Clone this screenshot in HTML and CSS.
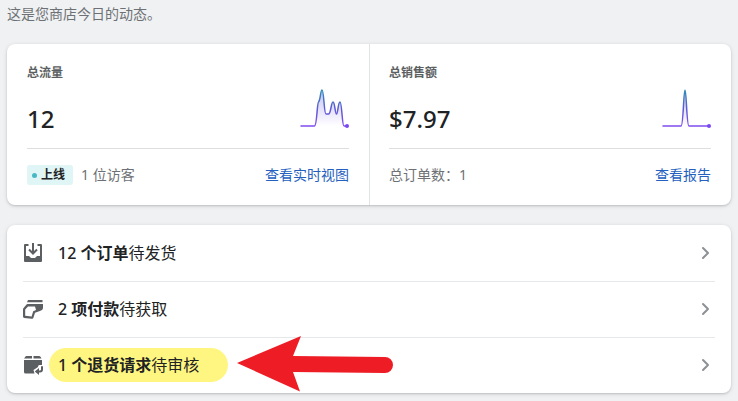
FILE: index.html
```html
<!DOCTYPE html>
<html lang="zh-CN">
<head>
<meta charset="utf-8">
<meta name="viewport" content="width=device-width, initial-scale=1">
<title>商店动态</title>
<link rel="stylesheet" href="styles.css">
</head>
<body>
<main>
  <p class="intro">这是您商店今日的动态。</p>

  <section class="card stats">
    <article class="stat">
      <h2 class="stat-title">总流量</h2>
      <div class="stat-main">
        <span class="stat-value">12</span>
        <svg class="spark" viewBox="-1 0 50 46" aria-hidden="true">
          <defs>
            <linearGradient id="line" gradientUnits="userSpaceOnUse" x1="0" y1="1" x2="0" y2="38">
              <stop offset="0" stop-color="#2d8fb8"/>
              <stop offset="0.5" stop-color="#5a5ed0"/>
              <stop offset="1" stop-color="#7f4df0"/>
            </linearGradient>
            <linearGradient id="fill" gradientUnits="userSpaceOnUse" x1="0" y1="1" x2="0" y2="38">
              <stop offset="0" stop-color="#5a78d0" stop-opacity="0.4"/>
              <stop offset="1" stop-color="#7f4df0" stop-opacity="0"/>
            </linearGradient>
          </defs>
          <path fill="url(#fill)" d="M15 38C17 38 17 15 18.500 14C20.500 12 20.500 2 22 2C24 2 24 26 26 26H28.500C31 26 31 14 33 14C35 14 35 26 36.500 26C38 26 38 14 40 14C42 14 42 38 44 38Z"/>
          <path fill="none" stroke="url(#line)" stroke-width="1.500" stroke-linecap="round" d="M1 38H14.500C17 38 17 15 18.500 14C20.500 12 20.500 2 22 2C24 2 24 26 26 26H28.500C31 26 31 14 33 14C35 14 35 26 36.500 26C38 26 38 14 40 14C42 14 42 38 44 38H47"/>
          <circle cx="47" cy="38" r="2" fill="#7b47f1"/>
        </svg>
      </div>
      <div class="stat-foot">
        <span class="visitors"><span class="badge">上线</span>1 位访客</span>
        <a href="#live">查看实时视图</a>
      </div>
    </article>
    <article class="stat">
      <h2 class="stat-title">总销售额</h2>
      <div class="stat-main">
        <span class="stat-value">$7.97</span>
        <svg class="spark" viewBox="-1 0 50 46" aria-hidden="true">
          <path fill="url(#fill)" d="M20 38C22 38 22 2 23 2C24 2 24 38 26 38Z"/>
          <path fill="none" stroke="url(#line)" stroke-width="1.500" stroke-linecap="round" d="M1 38H19C21.500 38 21.500 2 23 2C24.500 2 24.500 38 27 38H47"/>
          <circle cx="47" cy="38" r="2" fill="#7b47f1"/>
        </svg>
      </div>
      <div class="stat-foot">
        <span>总订单数：1</span>
        <a href="#report">查看报告</a>
      </div>
    </article>
  </section>

  <nav class="card tasks">
    <a class="task" href="#orders">
      <svg class="icon" viewBox="0 0 20 20" aria-hidden="true">
        <path d="M5.500 1H2a1 1 0 0 0-1 1v16a1 1 0 0 0 1 1h16a1 1 0 0 0 1-1V2a1 1 0 0 0-1-1h-3.500v2H17v10h-3l-2 2H8l-2-2H3V3h2.500z"/>
        <path fill="none" stroke="currentColor" stroke-width="2" d="M10 0v10M6 6.500l4 4 4-4"/>
      </svg>
      <span><b>12 <strong>个订单</strong></b>待发货</span>
      <svg class="chevron" viewBox="0 0 20 20" aria-hidden="true"><path d="M8 5l5 5-5 5"/></svg>
    </a>
    <a class="task" href="#payments">
      <svg class="icon" viewBox="0 0 20 20" aria-hidden="true">
        <path d="M5 1h14.500v2.200H4z"/>
        <path fill-rule="evenodd" d="M4.500 5H20v3.500c0 1.800-1 2.800-2.500 3.300L12 13.700l-1.500 4.800c-.3.900-1 1.300-1.800 1.200L1.200 19Q0 18.800 0 17.500V10.500Q0 9.500.8 8.700L3.500 5.600Q4 5 4.500 5zM5 7.500L2.200 10.500V16.800L8.600 17.500L10.200 12.200L13 11L12 7.500z"/>
      </svg>
      <span><b>2 <strong>项付款</strong></b>待获取</span>
      <svg class="chevron" viewBox="0 0 20 20" aria-hidden="true"><path d="M8 5l5 5-5 5"/></svg>
    </a>
    <a class="task" href="#returns">
      <svg class="icon" viewBox="0 0 20 20" aria-hidden="true">
        <path d="M3 1h6v2.500H1zM10.500 1H16q1 0 1.500.8L18.500 3.500h-8zM1 5h18v5h-2.500q-1.500 0-1.500 1.500v.5L10.500 15l1 3.500H2.500Q1 18.500 1 17z"/>
        <path fill="none" stroke="currentColor" stroke-width="2" stroke-linecap="round" d="M19 12v2.500a2 2 0 0 1-2 2h-3"/>
        <path d="M16 13v7L11.800 16.500z"/>
      </svg>
      <span class="marked"><b>1 <strong>个退货请求</strong></b>待审核</span>
      <svg class="chevron" viewBox="0 0 20 20" aria-hidden="true"><path d="M8 5l5 5-5 5"/></svg>
      <svg class="arrow" viewBox="0 0 156 56" aria-hidden="true">
        <path d="M0 27L64 0 56 20 148 21a8 8 0 0 1 0 16L56 36 63 55.500z"/>
      </svg>
    </a>
  </nav>
</main>
</body>
</html>
```
FILE: styles.css
```css
* {
  box-sizing: border-box;
}

body {
  margin: 0;
  padding: 4px 7px 8px;
  background: #f0f1f3;
  color: #202223;
  font: 14px/20px "Noto Sans", "Noto Sans CJK SC", sans-serif;
}

a {
  color: #2460be;
  text-decoration: none;
}

.intro {
  margin: 0 0 20px;
  color: #6d7175;
}

.card {
  background: #fff;
  border-radius: 8px;
  box-shadow: 0 1px 5px rgba(23, 24, 24, 0.1), 0 1px 2px rgba(0, 0, 0, 0.15);
}

.stats {
  display: grid;
  grid-template-columns: 1fr 1fr;
  margin-bottom: 20px;
}

.stat {
  padding: 20px;
}

.stat + .stat {
  box-shadow: inset 1px 0 #e1e3e5;
}

.stat-title {
  margin: 0 0 6px;
  color: #5c5f62;
  font-size: 12px;
  font-weight: 700;
  line-height: 18px;
}

.stat-main {
  display: flex;
  align-items: flex-end;
  justify-content: space-between;
  padding-bottom: 14px;
  border-bottom: 1px solid #dcdee0;
}

.stat-value {
  font-size: 24px;
  font-weight: 500;
  line-height: 30px;
}

.spark {
  width: 50px;
  height: 46px;
}

.stat-foot {
  display: flex;
  justify-content: space-between;
  padding-top: 16px;
  color: #6d7175;
}

.visitors {
  display: flex;
  gap: 8px;
}

.badge {
  display: flex;
  align-items: center;
  gap: 4px;
  padding: 0 8px 0 5px;
  border-radius: 3px;
  background: #e0f5f5;
  color: #202223;
  font-size: 12px;
  font-weight: 700;
}

.badge::before {
  content: "";
  width: 5px;
  height: 5px;
  border-radius: 50%;
  background: #47b8c4;
}

.tasks {
  padding: 0 16px;
}

.task {
  position: relative;
  display: flex;
  align-items: center;
  gap: 15px;
  height: 56px;
  color: #202223;
  font-size: 16px;
  line-height: 24px;
}

.task + .task {
  box-shadow: inset 0 1px #e6e8ea;
}

.task b {
  font-weight: 500;
}

.task strong {
  font-weight: 700;
}

.icon {
  width: 20px;
  height: 20px;
  color: #5c5f62;
  fill: currentColor;
}

.chevron {
  width: 20px;
  height: 20px;
  margin-left: auto;
  fill: none;
  stroke: #8c9196;
  stroke-width: 2;
  stroke-linecap: round;
  stroke-linejoin: round;
}

.marked {
  position: relative;
  z-index: 0;
}

.marked::before {
  content: "";
  position: absolute;
  z-index: -1;
  top: -5px;
  left: -9px;
  width: 179px;
  height: 34px;
  border-radius: 17px;
  background: #fff681;
}

.arrow {
  position: absolute;
  top: -1px;
  left: 214px;
  width: 156px;
  height: 56px;
  fill: #ee1c25;
}
```
